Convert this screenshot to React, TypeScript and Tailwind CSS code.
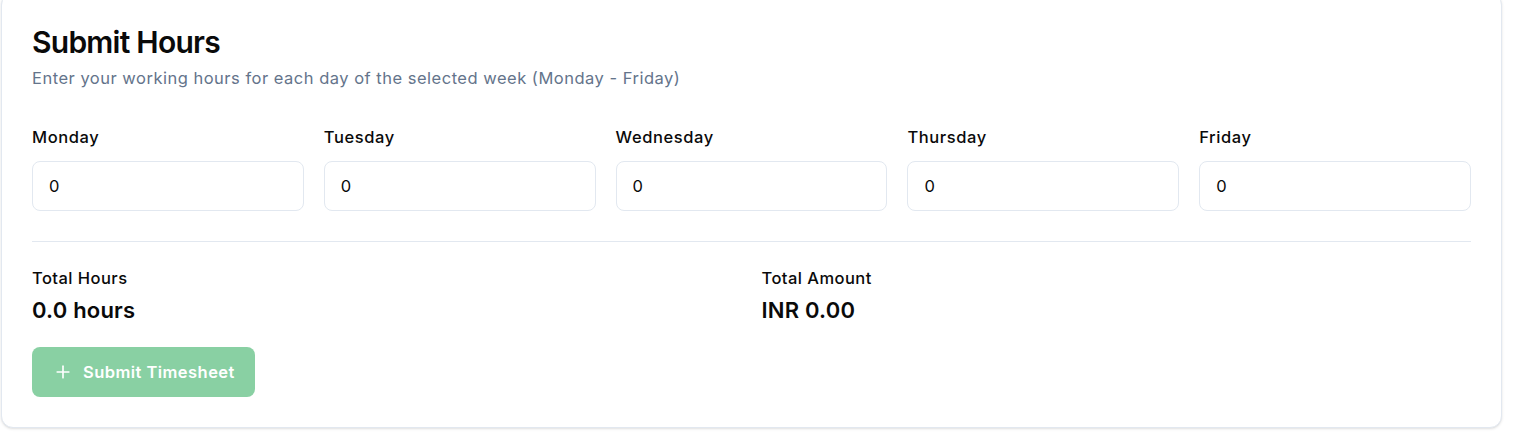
import React, { useState } from 'react'
import { Plus } from 'lucide-react'

const days = ['Monday', 'Tuesday', 'Wednesday', 'Thursday', 'Friday']

export default function App() {
  const [hours, setHours] = useState<string[]>(['0', '0', '0', '0', '0'])
  const total = hours.reduce((sum, h) => sum + (parseFloat(h) || 0), 0)

  return (
    <div className="min-h-screen bg-white pl-px font-['Inter',sans-serif] text-[#0a0a0a]">
      <div className="-mt-[7px] w-[1501px] rounded-xl border border-[#e2e8f0] bg-white p-[30px] shadow-sm">
        <h1 className="text-3xl font-semibold tracking-tight">Submit Hours</h1>
        <p className="mt-1.5 text-[16.5px] leading-6 tracking-[0.5px] text-[#64748b]">
          Enter your working hours for each day of the selected week (Monday - Friday)
        </p>

        <div className="mt-[35px] grid grid-cols-5 gap-5">
          {days.map((day, i) => (
            <div key={day}>
              <label className="block text-[16.5px] leading-6 font-medium tracking-[0.6px]">{day}</label>
              <input
                type="number"
                value={hours[i]}
                onChange={(e) => {
                  const next = [...hours]
                  next[i] = e.target.value
                  setHours(next)
                }}
                className="mt-3 block w-full rounded-lg border border-[#e2e8f0] px-4 py-3 text-[16.5px] leading-6 tracking-[0.5px] outline-none [appearance:textfield]"
              />
            </div>
          ))}
        </div>

        <div className="mt-[30px] border-t border-[#e2e8f0]" />

        <div className="mt-6 grid grid-cols-2 gap-5">
          <div>
            <div className="text-[16.5px] leading-6 font-medium tracking-[0.45px]">Total Hours</div>
            <div className="mt-1.5 text-[22px] font-semibold leading-7 tracking-[0.2px]">
              {total.toFixed(1)} hours
            </div>
          </div>
          <div>
            <div className="text-[16.5px] leading-6 font-medium tracking-[0.45px]">Total Amount</div>
            <div className="mt-1.5 text-[22px] font-semibold leading-7 tracking-[0.2px]">
              INR {(0).toFixed(2)}
            </div>
          </div>
        </div>

        <button
          disabled={total === 0}
          className="mt-[23px] flex items-center gap-2.5 rounded-lg bg-[#16a34a] py-[13px] pl-[21px] pr-5 text-[16.5px] leading-6 font-semibold tracking-[0.45px] text-white disabled:opacity-50"
        >
          <Plus className="h-5 w-5" />
          Submit Timesheet
        </button>
      </div>
    </div>
  )
}
